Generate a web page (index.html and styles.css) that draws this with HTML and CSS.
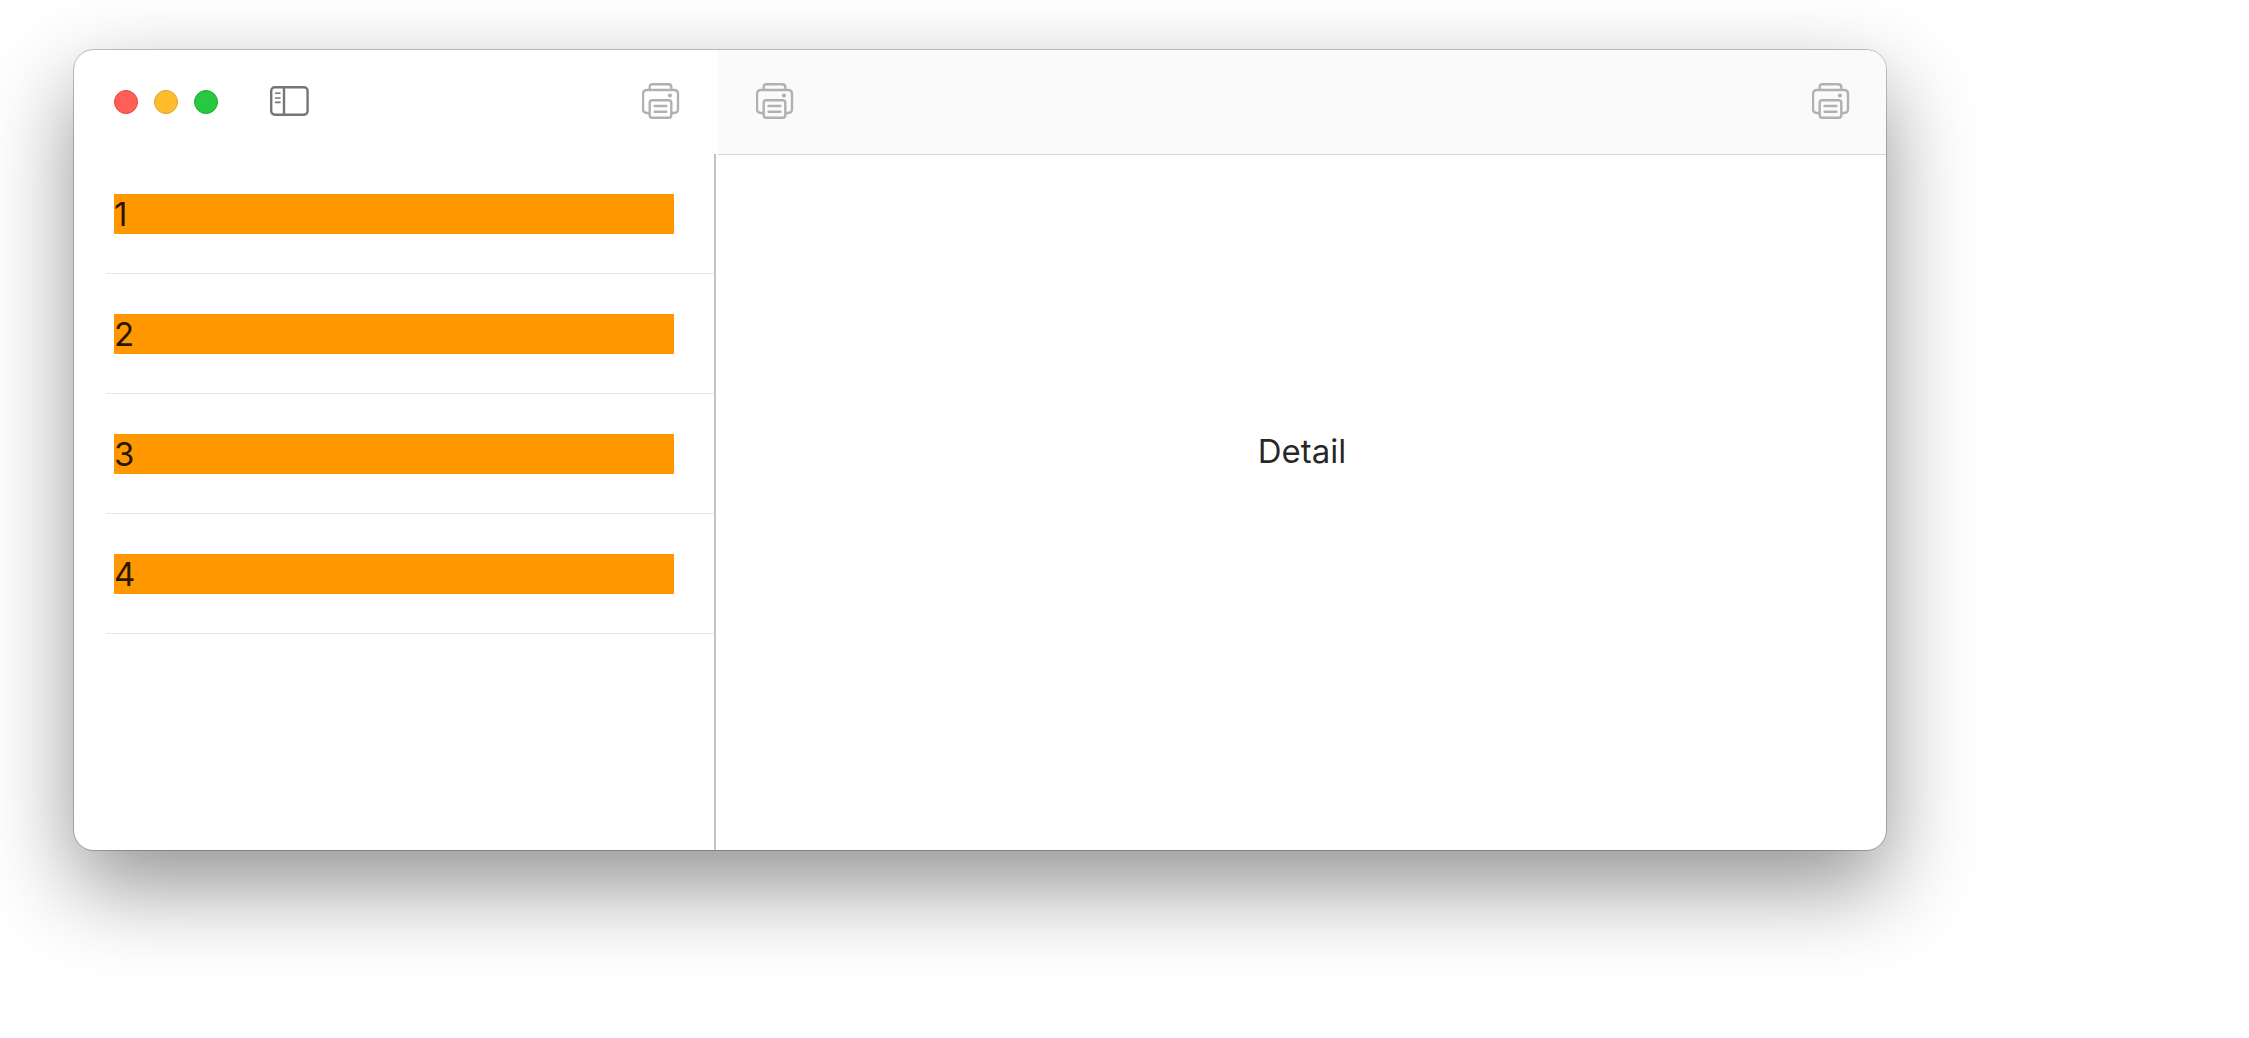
FILE: index.html
```
<!DOCTYPE html>
<html lang="en">
	<head>
		<meta charset="UTF-8" />
		<meta name="viewport" content="width=device-width, initial-scale=1.0" />
		<title>Detail</title>
		<link rel="stylesheet" href="styles.css">
	</head>

	<body>
		<!--the printer is used three times, so it is drawn once here-->
		<svg class="sprite" width="0" height="0" aria-hidden="true">
			<symbol id="printer" viewBox="0 0 38 36">
				<path d="M7.7 7V4.2Q7.7 1.3 10.6 1.3H26.4Q29.3 1.3 29.3 4.2V7" />
				<path d="M7.5 30H5Q1 30 1 26V11Q1 7 5 7H32Q36 7 36 11V26Q36 30 32 30H29.5" />
				<rect x="7.7" y="17.3" width="21.6" height="17.4" rx="2.4" />
				<path d="M12.6 23H24.4M12.6 28.7H24.4" stroke-linecap="round" />
				<circle class="dot" cx="28" cy="12.5" r="2.1" />
			</symbol>
		</svg>

		<main class="window">
			<section class="sidebar">
				<header class="toolbar">
					<div class="lights">
						<button class="light light--close" aria-label="Close"></button>
						<button class="light light--minimize" aria-label="Minimize"></button>
						<button class="light light--zoom" aria-label="Zoom"></button>
					</div>
					<button class="tool tool--toggle" aria-label="Toggle sidebar">
						<svg class="icon icon--dark" width="39" height="30" viewBox="0 0 39 30" aria-hidden="true">
							<rect x="1.2" y="1.2" width="36.4" height="27.5" rx="3.6" />
							<path d="M14 1V29" />
							<path class="thin" d="M5.6 7.3H10M5.6 12H10M5.6 16.4H10" />
						</svg>
					</button>
					<button class="tool tool--end" aria-label="Print">
						<svg class="icon" width="38" height="36" aria-hidden="true"><use href="#printer" /></svg>
					</button>
				</header>
				<ul class="list">
					<li class="list__row"><span class="list__label">1</span></li>
					<li class="list__row"><span class="list__label">2</span></li>
					<li class="list__row"><span class="list__label">3</span></li>
					<li class="list__row"><span class="list__label">4</span></li>
				</ul>
			</section>

			<section class="detail">
				<header class="toolbar toolbar--detail">
					<button class="tool" aria-label="Print">
						<svg class="icon" width="38" height="36" aria-hidden="true"><use href="#printer" /></svg>
					</button>
					<button class="tool tool--end" aria-label="Print">
						<svg class="icon" width="38" height="36" aria-hidden="true"><use href="#printer" /></svg>
					</button>
				</header>
				<p class="detail__text">Detail</p>
			</section>
		</main>
	</body>
</html>
```

FILE: styles.css
```
:root {
	--toolbar-height: 104px;
	--text: rgba(0, 0, 0, 0.85);
}
* {
	box-sizing: border-box;
}
body {
	display: flex;
	min-height: 100vh;
	margin: 0;
	padding: 50px 363px 188px 74px;
	background: #fff;
	color: var(--text);
	font: 33px/40px Inter, "Liberation Sans", sans-serif;
}
button {
	appearance: none;
	border: 0;
	padding: 0;
	background: none;
	cursor: pointer;
}
.sprite {
	position: absolute;
}
.window {
	display: grid;
	grid-template-columns: 644px 1fr;
	flex: 1;
	overflow: hidden;
	background: #fff;
	border-radius: 20px;
	box-shadow: 0 0 0 1px rgba(0, 0, 0, 0.22), 0 36px 88px rgba(0, 0, 0, 0.43);
}
.sidebar,
.detail {
	display: flex;
	flex-direction: column;
}
.toolbar {
	display: flex;
	align-items: center;
	height: var(--toolbar-height);
	padding: 0 38px 0 40px;
}
.toolbar--detail {
	height: calc(var(--toolbar-height) + 1px);
	padding: 0 36px 0 38px;
	background: #fafafa;
	border-bottom: 1px solid #d9d9d9;
}
.lights {
	display: flex;
	gap: 16px;
}
.light {
	width: 24px;
	height: 24px;
	border: 1px solid;
	border-radius: 50%;
}
.light--close {
	background: #ff5f57;
	border-color: #e2463f;
}
.light--minimize {
	background: #febc2e;
	border-color: #e0a028;
}
.light--zoom {
	background: #28c840;
	border-color: #1eab2f;
}
.tool {
	display: flex;
	padding-bottom: 2px;
}
.tool--toggle {
	margin-left: 52px;
}
.tool--end {
	margin-left: auto;
}
.icon {
	fill: none;
	stroke: #b1b1b1;
	stroke-width: 2.4;
}
.icon--dark {
	stroke: #757575;
	stroke-width: 2.4;
}
.thin {
	stroke-width: 1.6;
	stroke-linecap: round;
}
.dot {
	fill: #b1b1b1;
	stroke: none;
}
.list {
	flex: 1;
	margin: 0 2px 0 0; /*the divider stops short of the detail column*/
	padding: 0 0 0 32px;
	border-right: 2px solid #c4c4c4;
	list-style: none;
}
.list__row {
	padding: 40px 40px 39px 8px;
	border-bottom: 1px solid #e5e5e5;
}
.list__label {
	display: block;
	background: #ff9800;
}
/*centered on the whole window, so the text runs up under the toolbar*/
.detail__text {
	display: flex;
	flex: 1;
	align-items: center;
	justify-content: center;
	margin: 0;
	padding-bottom: var(--toolbar-height);
}
```
